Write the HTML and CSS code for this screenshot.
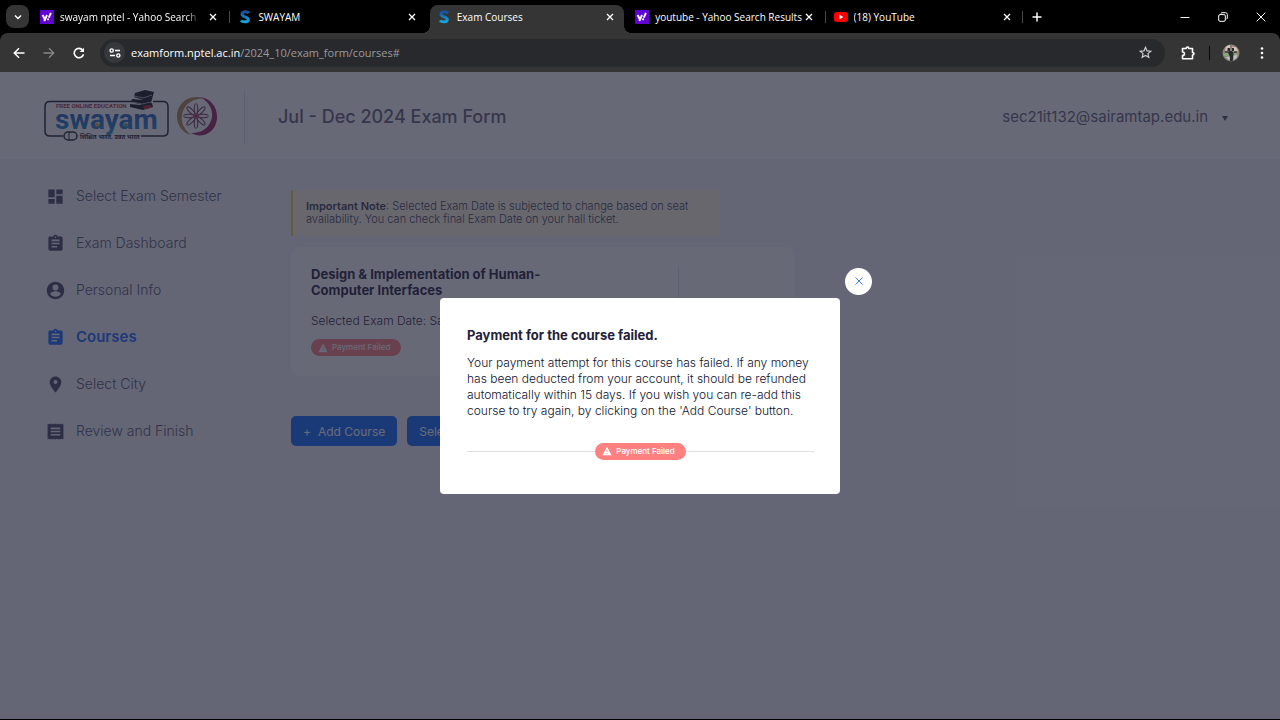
FILE: index.html
```html
<!DOCTYPE html>
<html lang="en">
<head>
<meta charset="utf-8">
<title>Exam Courses</title>
<link rel="stylesheet" href="styles.css">
</head>
<body>
<svg class="defs" aria-hidden="true">
  <defs>
    <linearGradient id="s-fill" x1="0" y1="0" x2="0" y2="1"><stop offset="0" stop-color="#17509c"/><stop offset="1" stop-color="#14a5dc"/></linearGradient>
    <linearGradient id="word-fill" x1="0" y1="0" x2="0" y2="1"><stop offset="0.2" stop-color="#2458b8"/><stop offset="1" stop-color="#1f95d0"/></linearGradient>
  </defs>
  <symbol id="x" viewBox="0 0 8 8"><path d="M1 1l6 6M7 1L1 7" fill="none" stroke="currentColor" stroke-width="1.3"/></symbol>
  <symbol id="yahoo" viewBox="0 0 14 14"><path fill="#5f01d1" d="M0 0h14v14H0z"/><path d="M2.6 5l2.1 4M7 5L4.3 11.200M10.900 2.800L8.800 7.600" fill="none" stroke="#fff" stroke-width="1.900"/><circle cx="8.100" cy="9.300" r="1.100" fill="#fff"/></symbol>
  <symbol id="swayam-s" viewBox="0 0 14 14"><path d="M11 3.200C9.500 1 4 1.200 4 4.300c0 3.200 6.300 2 6.300 5.200 0 3-5.600 3-7.300.800" fill="none" stroke="url(#s-fill)" stroke-width="3"/></symbol>
  <symbol id="clip" viewBox="0 0 24 24"><path fill="currentColor" d="M19 3h-4.180C14.400 1.840 13.300 1 12 1s-2.400.840-2.820 2H5c-1.100 0-2 .9-2 2v14c0 1.100.9 2 2 2h14c1.100 0 2-.9 2-2V5c0-1.100-.9-2-2-2zm-7 0c.550 0 1 .450 1 1s-.450 1-1 1-1-.450-1-1 .450-1 1-1zm2 14H7v-2h7v2zm3-4H7v-2h10v2zm0-4H7V7h10v2z"/></symbol>
  <symbol id="warn" viewBox="0 0 24 24"><path fill="currentColor" d="M1 22h22L12 2zM13 19h-2v-2h2zm0-4h-2V9h2z"/></symbol>
</svg>

<div class="browser">
  <header class="tabbar">
    <button class="tab-search" aria-label="Search tabs"><svg width="8" height="8" viewBox="0 0 8 8"><path d="M1 2.500l3 3 3-3" fill="none" stroke="#fff" stroke-width="1.500"/></svg></button>
    <div class="tabs">
      <div class="tab"><svg class="fav"><use href="#yahoo"/></svg><span class="tab-title fade">swayam nptel - Yahoo Search Results</span><button class="tab-close" aria-label="Close tab"><svg><use href="#x"/></svg></button></div>
      <div class="tab split"><svg class="fav"><use href="#swayam-s"/></svg><span class="tab-title">SWAYAM</span><button class="tab-close" aria-label="Close tab"><svg><use href="#x"/></svg></button></div>
      <div class="tab active"><svg class="fav"><use href="#swayam-s"/></svg><span class="tab-title">Exam Courses</span><button class="tab-close" aria-label="Close tab"><svg><use href="#x"/></svg></button></div>
      <div class="tab"><svg class="fav"><use href="#yahoo"/></svg><span class="tab-title">youtube - Yahoo Search Results</span><button class="tab-close" aria-label="Close tab"><svg><use href="#x"/></svg></button></div>
      <div class="tab split"><svg class="fav" viewBox="0 0 14 14"><rect y="2" width="14" height="10" rx="3" fill="#f00"/><path d="M5.500 4.800v4.400L9.300 7z" fill="#fff"/></svg><span class="tab-title">(18) YouTube</span><button class="tab-close" aria-label="Close tab"><svg><use href="#x"/></svg></button></div>
    </div>
    <button class="new-tab" aria-label="New tab"><svg width="10" height="10" viewBox="0 0 10 10"><path d="M5 .5v9M.5 5h9" stroke="#fff" stroke-width="1.500"/></svg></button>
    <div class="window-controls">
      <button aria-label="Minimize"><svg width="10" height="10" viewBox="0 0 10 10"><path d="M.5 5.500h9" stroke="#fff"/></svg></button>
      <button aria-label="Restore"><svg width="10" height="10" viewBox="0 0 10 10"><path d="M3 1.500Q3 .7 4 .7h3.500q1.800 0 1.800 1.800V6q0 1-.8 1M2 2.600h4q1.300 0 1.300 1.300V8q0 1.300-1.300 1.300H2Q.7 9.300.7 8V3.900Q.7 2.600 2 2.600z" fill="none" stroke="#fff"/></svg></button>
      <button aria-label="Close"><svg width="10" height="10" viewBox="0 0 10 10"><path d="M.7.700l8.600 8.600M9.300.700L.7 9.300" stroke="#fff"/></svg></button>
    </div>
  </header>

  <div class="toolbar">
    <button aria-label="Back"><svg width="12" height="12" viewBox="0 0 12 12"><path d="M11.500 6H1.500M6 1.300L1.300 6 6 10.700" fill="none" stroke="#fff" stroke-width="1.500"/></svg></button>
    <button aria-label="Forward"><svg width="12" height="12" viewBox="0 0 12 12"><path d="M.5 6h10M6 1.300L10.700 6 6 10.700" fill="none" stroke="#868686" stroke-width="1.300"/></svg></button>
    <button aria-label="Reload"><svg width="12" height="12" viewBox="0 0 12 12"><path d="M10.500 7.200A4.700 4.700 0 1 1 9.700 3.200" fill="none" stroke="#fff" stroke-width="1.600"/><path d="M11 .8v4.300H6.700z" fill="#fff"/></svg></button>
    <div class="omnibox">
      <button class="site-info" aria-label="View site information"><svg width="12" height="10" viewBox="0 0 12 10"><g fill="none" stroke="#fff" stroke-width="1.400"><circle cx="2.700" cy="2.500" r="1.600"/><path d="M6 2.500h5M1 7.500h5"/><circle cx="9.300" cy="7.500" r="1.600"/></g></svg></button>
      <div class="url"><span>examform.nptel.ac.in</span>/2024_10/exam_form/courses#</div>
      <button aria-label="Bookmark this tab"><svg width="13" height="13" viewBox="0 0 24 24"><path d="M12 2.500l2.800 6.400 7 .6-5.300 4.600 1.600 6.800L12 17.300l-6.100 3.600 1.600-6.800L2.200 9.500l7-.6z" fill="none" stroke="#ccc" stroke-width="2.200"/></svg></button>
    </div>
    <button class="extensions" aria-label="Extensions"><svg width="14" height="14" viewBox="0 0 14 14"><path d="M1.500 2.500h3.700c0-2 2.600-2 2.600 0h3.700v4c2 0 2 2.500 0 2.500v3.700h-10V9.500c2.600 0 2.600-3.500 0-3.500z" fill="none" stroke="#fff" stroke-width="1.600" stroke-linejoin="round"/></svg></button>
    <i class="bar-split"></i>
    <button class="profile" aria-label="Profile"><svg width="18" height="18" viewBox="0 0 18 18"><circle cx="9" cy="9" r="8.500" fill="#8b817b"/><path d="M4 2.500l4-1.700v6H3zM10 2.500l4.500 1 1.500 4h-5z" fill="#d8c3b8"/><path d="M1 9.500l5-1 1 3-5 1zM11 9l5 .5-1 2-4-.5z" fill="#87a978"/><path d="M5.500 4H8v3H5.500zM10 4h2v3h-2zM7 7h3l1.500 1.500v4l-1 4.500H8V13L6 8.500z" fill="#292b2d"/><path d="M11.500 11.500l4-.5-1 3-3 2zM3.500 13l4-.5v4z" fill="#bfc3c5"/><path d="M3 8h3M12 8h3" stroke="#413735" stroke-width="1.500"/></svg></button>
    <button class="more" aria-label="Menu"><svg width="4" height="12" viewBox="0 0 4 12"><g fill="#fff"><circle cx="2" cy="1.500" r="1.300"/><circle cx="2" cy="6" r="1.300"/><circle cx="2" cy="10.500" r="1.300"/></g></svg></button>
  </div>

  <div class="page">
    <header class="site-header">
      <a class="logos" href="#" aria-label="Swayam home">
        <svg width="126" height="54" viewBox="0 0 126 54">
          <path d="M89 11.500H6q-5 0-5 5V41q0 5 5 5h13M109 11.500h10q5 0 5 5V41q0 5-5 5H97" fill="none" stroke="#20242c" stroke-width="1.500"/>
          <text x="12" y="18" class="logo-tag">FREE ONLINE EDUCATION</text>
          <text x="11" y="39" class="logo-word">swayam</text>
          <circle cx="53" cy="35" r="2" fill="#e0a13c"/><circle cx="82" cy="35" r="2" fill="#5faf7c"/>
          <rect x="20" y="42" width="13" height="8" rx="4" fill="#fff" stroke="#20242c" stroke-width="1.500"/><path d="M25 42v8" stroke="#20242c"/>
          <text x="36" y="49" class="logo-motto">शिक्षित भारत, उन्नत भारत</text>
          <path d="M91 3l10-3 9 2-2 7-9 1-9-3zM88 9l10 1 10-1-1 4-8 2-12-3zM86 14l10 1 12-2 1 4-10 3-13-3z" fill="#15161d"/>
          <path d="M90 6l9 2 9-3M88 12l10 2 9-2" stroke="#c6cad5" fill="none" stroke-width=".8"/>
          <path d="M99 16l6-1 3 1-4 3h-4z" fill="#b4262f"/>
        </svg>
        <svg width="43" height="43" viewBox="0 0 43 43">
          <path d="M28 3.500C14-2 1 9 2 23c.6 8 6 15 14 17C7 33 5 24 8 16 11 8 18 4 28 3.500z" fill="#b08a52"/>
          <path d="M25 2c12 6 16 19 8 29-4 5-10 7-17 7 10 6 24 1 26-14C43 12 35 3 25 2z" fill="#982460"/>
          <g fill="none" stroke="#6d2949" stroke-width="1"><ellipse cx="21" cy="14" rx="1.800" ry="5.500"/><ellipse cx="21" cy="14" rx="1.800" ry="5.500" transform="rotate(45 21 21)"/><ellipse cx="21" cy="14" rx="1.800" ry="5.500" transform="rotate(90 21 21)"/><ellipse cx="21" cy="14" rx="1.800" ry="5.500" transform="rotate(135 21 21)"/><ellipse cx="21" cy="14" rx="1.800" ry="5.500" transform="rotate(180 21 21)"/><ellipse cx="21" cy="14" rx="1.800" ry="5.500" transform="rotate(225 21 21)"/><ellipse cx="21" cy="14" rx="1.800" ry="5.500" transform="rotate(270 21 21)"/><ellipse cx="21" cy="14" rx="1.800" ry="5.500" transform="rotate(315 21 21)"/></g><circle cx="21" cy="21" r="2" fill="#c32e4d"/>
        </svg>
      </a>
      <h1>Jul - Dec 2024 Exam Form</h1>
      <button class="account">sec21it132@sairamtap.edu.in <svg width="6" height="8" viewBox="0 0 6 8"><path d="M0 3h6L3 8z" fill="#4b4c62"/></svg></button>
    </header>

    <div class="content">
      <nav class="side">
        <a href="#"><svg viewBox="0 0 24 24"><path fill="currentColor" d="M3 13h8V3H3v10zm0 8h8v-6H3v6zm10 0h8V11h-8v10zm0-18v6h8V3h-8z"/></svg>Select Exam Semester</a>
        <a href="#"><svg><use href="#clip"/></svg>Exam Dashboard</a>
        <a href="#"><svg viewBox="0 0 24 24"><path fill="currentColor" d="M12 1C5.900 1 1 5.900 1 12s4.900 11 11 11 11-4.900 11-11S18.100 1 12 1zm0 3.500a3.700 3.700 0 1 1 0 7.400 3.700 3.700 0 0 1 0-7.400zM12 20c-2.800 0-5.200-1.400-6.600-3.500 0-2.200 4.400-3.500 6.600-3.500s6.600 1.300 6.600 3.500C17.200 18.600 14.800 20 12 20z"/></svg>Personal Info</a>
        <a href="#" class="current"><svg><use href="#clip"/></svg>Courses</a>
        <a href="#"><svg viewBox="-1 -1 26 26"><path fill="currentColor" d="M12 1C7.600 1 4 4.400 4 8.700 4 14.500 12 23 12 23s8-8.500 8-14.300C20 4.400 16.400 1 12 1zm0 10.400a2.700 2.700 0 1 1 0-5.400 2.700 2.700 0 0 1 0 5.400z"/></svg>Select City</a>
        <a href="#"><svg viewBox="0 0 24 24"><path fill="currentColor" d="M18 17H6v-2h12v2zm0-4H6v-2h12v2zm0-4H6V7h12v2zM2 22l1.700-1 1.600 1L7 21l1.700 1 1.600-1 1.700 1 1.700-1 1.600 1 1.700-1 1.700 1 1.600-1 1.700 1V2l-1.700 1-1.600-1L17 3l-1.700-1-1.600 1L12 2l-1.700 1-1.600-1L7 3 5.300 2 3.700 3 2 2v20z"/></svg>Review and Finish</a>
      </nav>
      <main class="main">
        <p class="note"><strong>Important Note</strong>: Selected Exam Date is subjected to change based on seat availability. You can check final Exam Date on your hall ticket.</p>
        <section class="course">
          <div class="course-info">
            <h2>Design &amp; Implementation of Human-Computer Interfaces</h2>
            <p>Selected Exam Date: Saturday</p>
            <span class="badge"><svg><use href="#warn"/></svg>Payment Failed</span>
          </div>
          <div class="course-side"></div>
        </section>
        <div class="actions">
          <button><span>+</span>Add Course</button>
          <button>Select City</button>
        </div>
      </main>
    </div>

    <div class="overlay">
      <div class="modal" role="dialog" aria-modal="true" aria-labelledby="dialog-title">
        <button class="modal-close" aria-label="Close"><svg width="8" height="8" viewBox="0 0 8 8"><path d="M.5.500l7 7M7.500.500l-7 7" stroke="#3d7ce0" fill="none"/></svg></button>
        <h2 id="dialog-title">Payment for the course failed.</h2>
        <p>Your payment attempt for this course has failed. If any money has been deducted from your account, it should be refunded automatically within 15 days. If you wish you can re-add this course to try again, by clicking on the 'Add Course' button.</p>
        <div class="status"><span class="badge"><svg><use href="#warn"/></svg>Payment Failed</span></div>
      </div>
    </div>
  </div>
</div>
</body>
</html>
```
FILE: styles.css
```css
* { box-sizing: border-box; }
body { margin: 0; background: #000; font-family: Inter, "Liberation Sans", sans-serif; }
button { border: 0; padding: 0; margin: 0; background: none; color: inherit; font: inherit; display: flex; align-items: center; justify-content: center; }
h1, h2, p { margin: 0; }
a { color: inherit; text-decoration: none; }
svg { flex: none; }
.defs { position: absolute; width: 0; height: 0; }
.browser { min-height: 100vh; display: flex; flex-direction: column; padding-bottom: 1px; }

.tabbar { display: flex; height: 33px; padding-left: 6px; color: #fff; font: 10px/16px "Open Sans", "Noto Sans", sans-serif; }
.tab-search { width: 23px; height: 23px; margin-top: 5px; border-radius: 8px; background: #353535; }
.tabs { flex: 1; max-width: 992px; display: grid; grid-template-columns: repeat(5, minmax(0, 1fr)); margin-left: 2px; padding-top: 5px; }
.tab { display: flex; align-items: center; padding: 0 11px 4px 9px; position: relative; }
.tab.active { background: #353535; border-radius: 8px 8px 0 0; padding: 0 9px 4px 7px; margin: 0 2px; }
.tab.active::before, .tab.active::after { content: ""; position: absolute; bottom: 0; width: 8px; height: 8px; }
.tab.active::before { left: -8px; background: radial-gradient(circle at 0 0, #000 8px, #353535 8px); }
.tab.active::after { right: -8px; background: radial-gradient(circle at 100% 0, #000 8px, #353535 8px); }
.tab.split::before { content: ""; position: absolute; left: 0; top: 6px; width: 1px; height: 12px; background: #4a4a4a; }
.tab:last-child::after { content: ""; position: absolute; right: 0; top: 6px; width: 1px; height: 12px; background: #4a4a4a; }
.fav { width: 14px; height: 14px; margin-right: 6px; }
.tab-title { flex: 1; min-width: 0; overflow: hidden; white-space: nowrap; }
.fade { margin-right: 8px; -webkit-mask-image: linear-gradient(90deg, #000 90%, transparent); mask-image: linear-gradient(90deg, #000 90%, transparent); }
.tab-close { width: 10px; height: 16px; }
.tab-close svg { width: 8px; height: 8px; }
.new-tab { width: 28px; }
.window-controls { display: flex; margin-left: auto; }
.window-controls button { width: 38px; }

.toolbar { display: flex; align-items: center; height: 39px; padding: 0 10px 0 4px; background: #353535; border-radius: 8px 8px 0 0; color: #9a9b9d; font: 11px/18px "Open Sans", "Noto Sans", sans-serif; }
.toolbar > button { width: 30px; height: 28px; }
.omnibox { flex: 1; display: flex; align-items: center; height: 28px; margin: 0 8px 0 6px; padding: 0 13px 0 4px; border-radius: 14px; background: #28292c; }
.site-info { width: 21px; height: 21px; border-radius: 50%; background: #37383b; }
.url { flex: 1; padding-left: 6px; }
.url span { color: #fff; }
.bar-split { width: 1px; height: 14px; margin: 0 6px; background: #080808; }
.toolbar > .more { width: 16px; margin-left: 8px; }

.page { flex: 1; position: relative; background: #f3f6fa; display: flex; flex-direction: column; }
.site-header { display: flex; align-items: center; height: 87px; padding: 2px 52px 0 44px; background: #fff; color: #626277; }
.logos { display: flex; align-items: center; gap: 5px; padding-right: 26px; border-right: 1px solid #dfe1e8; }
.logo-tag { font: bold 6px Roboto, "Liberation Sans", sans-serif; fill: #a53744; }
.logo-word { font: bold 28px Roboto, "Liberation Sans", sans-serif; fill: url(#word-fill); }
.logo-motto { font: bold 6px "Noto Sans", sans-serif; fill: #20242c; }
h1 { padding-left: 33px; font-size: 18px; line-height: 24px; font-weight: 500; }
.account { margin-left: auto; gap: 14px; font-size: 15px; line-height: 22px; }

.content { display: flex; padding: 27px 48px 40px 46px; }
.side { width: 245px; display: flex; flex-direction: column; gap: 27px; color: #55556c; font-size: 14px; line-height: 20px; font-weight: 300; }
.side a { display: flex; align-items: center; gap: 11px; }
.side svg { width: 19px; height: 19px; color: #4a4a65; }
.side .current { font-size: 15px; font-weight: 600; }
.side .current, .side .current svg { color: #1769ff; }
.main { flex: 1; max-width: 504px; padding-top: 4px; color: #1f2138; }
.note { width: 85%; padding: 10px 20px 10px 13px; border-left: 2px solid #ffcc4d; background: #fff8e3; color: #3b3c54; font-size: 11px; line-height: 13px; font-weight: 300; }
.note strong { font-weight: 600; }
.course { display: flex; height: 129px; margin-top: 11px; padding: 19px 20px; border-radius: 10px; background: #fff; }
.course-info { flex: 1; }
.course-info h2 { max-width: 250px; font-size: 13px; line-height: 16px; font-weight: 700; }
.course-info p { margin: 15px 0 10px; font-size: 12px; line-height: 16px; font-weight: 300; }
.course-side { width: 97px; border-left: 1px solid #dfe1e8; }
.badge { display: inline-flex; align-items: center; gap: 4px; height: 17px; padding: 0 11px 0 7px; border-radius: 9px; background: #ff8080; color: #fff; font-size: 8px; line-height: 11px; font-weight: 500; vertical-align: top; }
.badge svg { width: 10px; height: 10px; }
.actions { display: flex; gap: 10px; margin-top: 40px; }
.actions button { height: 30px; padding: 0 12px; gap: 7px; border-radius: 5px; background: #0d6efd; color: #fff; font-size: 12px; font-weight: 400; }

.overlay { position: absolute; inset: 0; display: flex; align-items: center; justify-content: center; background: rgba(33, 34, 55, 0.68); }
.modal { position: relative; width: 400px; padding: 27px 26px 34px 27px; border-radius: 4px; background: #fff; color: #10122c; }
.modal h2 { font-size: 13px; line-height: 20px; font-weight: 700; color: #1f2138; }
.modal p { margin: 10px 0 24px; font-size: 12px; line-height: 16px; font-weight: 300; }
.modal-close { position: absolute; right: -32px; top: -30px; width: 27px; height: 27px; border-radius: 50%; background: #fff; }
.status { display: flex; align-items: center; }
.status::before, .status::after { content: ""; flex: 1; height: 1px; background: #dfdfe4; }
```
